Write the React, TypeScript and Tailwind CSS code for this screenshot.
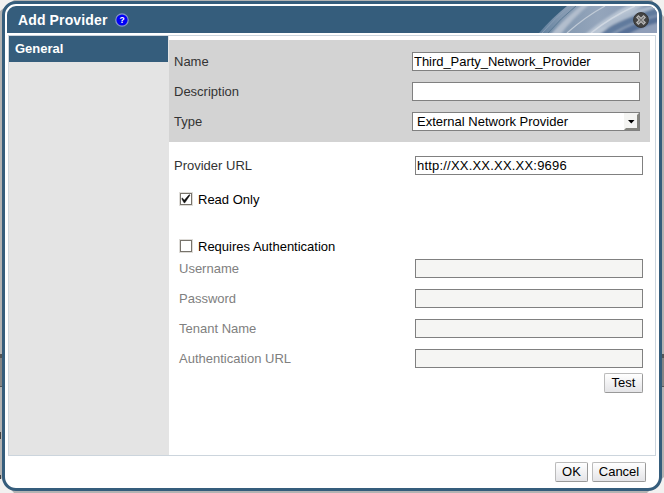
import React from "react";

const inputBase = "h-[19px] w-[228px] border border-[#808080] px-[1px] text-[13px] leading-[17px] outline-none";

function Field({ label, value = "", disabled = false }: { label: string; value?: string; disabled?: boolean }) {
  return (
    <label className={`flex h-[30px] items-center justify-between ${disabled ? "text-[#808080]" : "text-[#333]"}`}>
      <span>{label}</span>
      <input
        className={`${inputBase} ${disabled ? "bg-[#f5f5f3]" : "bg-white tracking-[-0.04px] text-black"}`}
        defaultValue={value}
        disabled={disabled}
      />
    </label>
  );
}

function Check({ label, checked = false }: { label: string; checked?: boolean }) {
  return (
    <div className="flex h-[15px] items-start text-black">
      <svg width="14" height="14" viewBox="0 0 14 14" className="mr-[5px] shrink-0">
        <rect x="0.5" y="0.5" width="13" height="13" fill="none" stroke="#dedcd8" />
        <rect x="1.5" y="1.5" width="11" height="11" fill="#fff" stroke="#77736b" />
        {checked && <path d="M3 5.8 L5.4 8 L10.2 2.6 L11 3.2 L5.9 10.8 L5 10.8 L2.8 6.9 Z" fill="#111" stroke="#111" strokeWidth="0.4" />}
      </svg>
      <span>{label}</span>
    </div>
  );
}

function Button({ label, width }: { label: string; width: string }) {
  return (
    <button
      className={`${width} flex h-5 justify-center rounded-[2px] border border-t-[#bbb] border-r-[#999] border-b-[#999] border-l-[#bbb] bg-linear-to-b from-white to-[#e4e4e7] text-[13px] leading-[17px] text-black`}
    >
      {label}
    </button>
  );
}

function HeaderArt() {
  return (
    <svg width="120" height="27" viewBox="0 0 120 27" className="absolute top-0 right-0">
      <defs>
        <linearGradient id="sheen" x1="0" y1="0" x2="1" y2="0">
          <stop offset="0" stopColor="#5f7f9d" />
          <stop offset="0.2" stopColor="#8499b1" />
          <stop offset="0.5" stopColor="#94a5bb" />
          <stop offset="1" stopColor="#8698b3" />
        </linearGradient>
        <filter id="soft" x="-10%" y="-30%" width="120%" height="160%">
          <feGaussianBlur stdDeviation="1" />
        </filter>
      </defs>
      <path d="M2 27 Q15 12 30 0 H120 V27 Z" fill="url(#sheen)" />
      <g filter="url(#soft)">
        <path d="M13 29 Q28 12 46 -2 L53 -2 Q36 12 23 29Z" fill="#b2becd" />
        <path d="M47 29 Q70 10 93 -2 L109 -2 Q80 13 62 29Z" fill="#b8c4d3" />
        <path d="M62 29 Q84 11 114 -2 L123 -2 V8 Q94 15 72 29Z" fill="#617a9d" />
        <path d="M60 22 Q82 8 116 -1 L122 1 Q88 12 72 21Z" fill="#aebccd" />
        <path d="M76 29 Q98 16 123 10 V16 Q103 21 90 29Z" fill="#576f96" />
        <path d="M91 29 Q108 20 123 17 V29Z" fill="#8f9eb8" />
      </g>
      <g fill="none">
        <path d="M5 27 Q18 12 33 0" stroke="#8da1b7" strokeWidth="0.8" />
        <path d="M11 27 Q24 12 39 0" stroke="#54758f" strokeWidth="0.8" />
        <path d="M30 27 Q48 11 68 0" stroke="#c0cad6" strokeWidth="1.2" />
        <path d="M54 27 Q74 11 98 0" stroke="#cfd7e1" strokeWidth="1.5" />
      </g>
    </svg>
  );
}

export default function App() {
  return (
    <div className="relative h-[493px] w-[664px] overflow-hidden bg-[#b3b3b3] font-['Liberation_Sans',Arial,sans-serif] text-[13px] leading-[15px]">
      <svg width="664" height="493" className="absolute inset-0">
        <path d="M0 0H14L0 11Z M652 0H664V17Z M0 477L14 493H0Z M664 477L647 493H664Z" fill="#f2f1f0" />
        <path d="M0 354H664V387H0Z" fill="#858585" />
        <path d="M0 354H664V358H0Z M0 386H664V387H0Z" fill="#555" />
        <path d="M0 432H1V439H0Z M0 475H1V479H0Z" fill="#444" />
      </svg>
      <section className="relative mt-px ml-[2px] flex h-[490px] w-[660px] flex-col overflow-hidden rounded-[14px] border-[3px] border-[#355d7c] bg-white p-[2px]">
        <header className="relative flex h-[27px] shrink-0 items-center overflow-hidden rounded-t-[9px] bg-[#355d7c] pl-[11px]">
          <HeaderArt />
          <h1 className="w-[89px] text-[14px] leading-[16px] font-bold tracking-[0.13px] whitespace-nowrap text-white">Add Provider</h1>
          <svg width="14" height="14" viewBox="0 0 14 14" className="ml-[8px]">
            <circle cx="7" cy="7" r="6.2" fill="#0000f5" stroke="#8797c5" strokeWidth="1.2" />
            <text x="7" y="10" textAnchor="middle" fontSize="8.5" fontWeight="bold" fill="#fff">?</text>
          </svg>
          <svg width="16" height="16" viewBox="0 0 16 16" className="relative mr-[8px] ml-auto">
            <circle cx="8" cy="8" r="7.4" fill="#444" stroke="#343434" />
            <path d="M4.2 4.2 L11.8 11.8 M11.8 4.2 L4.2 11.8" stroke="#bcbcbc" strokeWidth="3.4" />
            <path d="M5 5 L11 11 M11 5 L5 11" stroke="#777" strokeWidth="1.2" />
          </svg>
        </header>

        <div className="mt-[2px] ml-px flex h-[421px] w-[648px] shrink-0 border border-[#ccd5dd]">
          <nav className="w-[160px] bg-[#e4e4e4]">
            <div className="h-[26px] w-[159px] bg-[#355d7c] pl-[6px] leading-[25px] font-bold text-white">General</div>
          </nav>
          <main className="flex-1 pt-[4px]">
            <div className="h-[102px] w-[481px] bg-[#d3d3d3] pt-[6px] pr-[10px] pl-[5px]">
              <Field label="Name" value="Third_Party_Network_Provider" />
              <Field label="Description" />
              <div className="flex h-[30px] items-center justify-between text-[#333]">
                <span>Type</span>
                <div className="flex h-[19px] w-[228px] border border-[#808080] bg-white pl-[4px] leading-[17px] text-black">
                  <span className="flex-1">External Network Provider</span>
                  <svg width="15" height="17" viewBox="0 0 15 17">
                    <rect width="15" height="17" fill="#f4f4f2" />
                    <path d="M0 17L2 15H13V2L15 0V17Z" fill="#85857f" />
                    <path d="M4 7H10.5L7.25 10.5Z" fill="#000" />
                  </svg>
                </div>
              </div>
            </div>

            <div className="mt-[8px] w-[474px] pl-[5px] [&_input]:tracking-[0.2px]">
              <Field label="Provider URL" value="http://XX.XX.XX.XX:9696" />
            </div>
            <div className="mt-[11px] pt-px pl-[10px]">
              <Check label="Read Only" checked />
            </div>
            <div className="mt-[32px] pl-[10px]">
              <Check label="Requires Authentication" />
            </div>
            <div className="-mt-px w-[474px] pl-[10px]">
              <Field label="Username" disabled />
              <Field label="Password" disabled />
              <Field label="Tenant Name" disabled />
              <Field label="Authentication URL" disabled />
              <div className="flex justify-end"><Button label="Test" width="w-[39px]" /></div>
            </div>
          </main>
        </div>

        <footer className="mt-[6px] mr-[11px] flex justify-end gap-[4px]">
          <Button label="OK" width="w-[33px]" />
          <Button label="Cancel" width="w-[54px]" />
        </footer>
      </section>
    </div>
  );
}
